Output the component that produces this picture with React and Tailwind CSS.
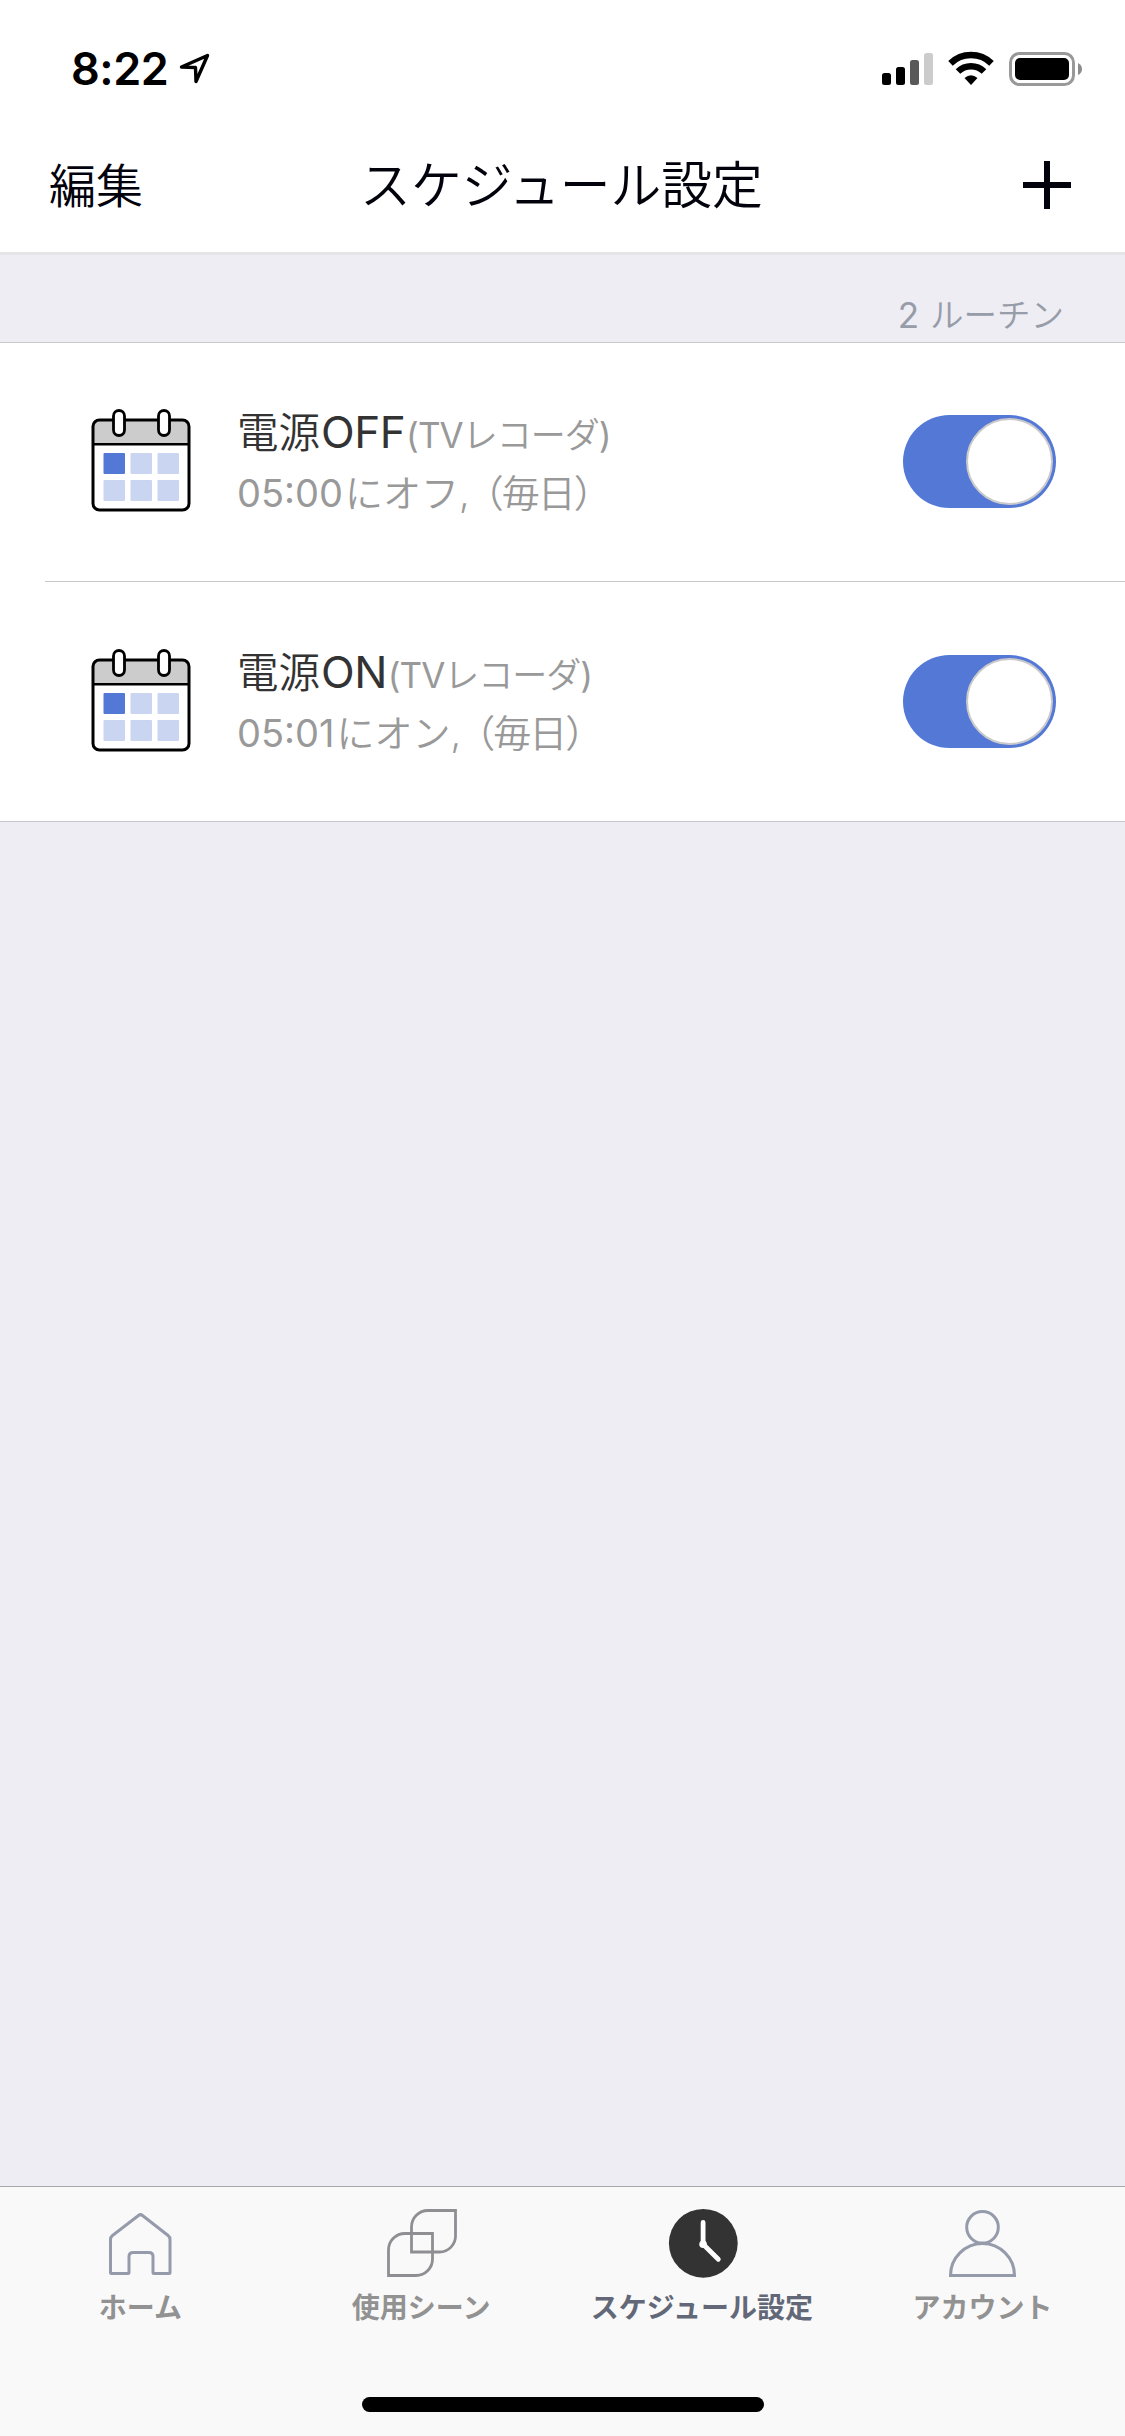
/**
 * App.jsx
 * Schedule settings screen: status bar, title bar, routine list and bottom tabs.
 */

import React, { useState } from 'react'

const initialRoutines = [
  { id: 1, kanji: '電源', mode: 'OFF', device: 'レコーダ', time: '05:00', action: 'にオフ', days: '（毎日）', on: true },
  { id: 2, kanji: '電源', mode: 'ON', device: 'レコーダ', time: '05:01', action: 'にオン', days: '（毎日）', on: true },
]

const tabs = [
  { id: 'home', label: 'ホーム', Icon: HomeIcon },
  { id: 'scene', label: '使用シーン', Icon: SceneIcon },
  { id: 'schedule', label: 'スケジュール設定', Icon: ClockIcon },
  { id: 'account', label: 'アカウント', Icon: AccountIcon },
]

function HomeIcon() {
  return (
    <svg width="72" height="72" viewBox="-0.5 -1 72 72" fill="none" stroke="#959bab" strokeWidth="3" strokeLinejoin="round">
      <path d="M6 64.5V31.5Q6 29 8 27.5L34 7.5Q36 5.8 38 7.5L63.6 27.5Q65.5 29 65.5 31.5V64.5Q65.5 65.5 64.5 65.5H49.5Q48.5 65.5 48.5 64.5V48.5Q48.5 44.5 44.5 44.5H28.5Q24.5 44.5 24.5 48.5V64.5Q24.5 65.5 23.5 65.5H7Q6 65.5 6 64.5Z" />
    </svg>
  )
}

function SceneIcon() {
  return (
    <svg width="72" height="72" viewBox="-1 0 72 72" fill="none" stroke="#8e8e93" strokeWidth="2.8">
      <path d="M25.5 44V20A16.5 16.5 0 0 1 42 3.5H69.5V28.5A16 16 0 0 1 53.5 45H25.5Z" />
      <path d="M2.5 68V43A16.5 16.5 0 0 1 19 26.5H46.5V51.5A16.5 16.5 0 0 1 30 68.5H2.5Z" />
    </svg>
  )
}

function ClockIcon() {
  return (
    <svg width="72" height="72" viewBox="-0.8 0 72 72" fill="none">
      <circle cx="36.5" cy="36.3" r="34.4" fill="#333" />
      <path d="M36.3 15.5V37.3L51.5 52.3" stroke="#fff" strokeWidth="4.8" strokeLinecap="round" />
      <circle cx="36.3" cy="37.3" r="3.8" fill="#fff" />
    </svg>
  )
}

function AccountIcon() {
  return (
    <svg width="72" height="72" viewBox="0 0 72 72" fill="none" stroke="#959bab" strokeWidth="3">
      <circle cx="35.5" cy="20.3" r="15.8" />
      <path d="M3.5 68.5A32 32 0 0 1 67.5 68.5Z" />
    </svg>
  )
}

function CalendarIcon() {
  return (
    <svg width="100" height="104" viewBox="0 0 100 104" fill="none">
      <path d="M2.5 35V17Q2.5 11 8.5 11H91.5Q97.5 11 97.5 17V35Z" fill="#ccc" />
      <rect x="2" y="11" width="96" height="90" rx="6.5" stroke="#000" strokeWidth="3" />
      <path d="M2 35.3H98" stroke="#000" strokeWidth="2.4" />
      <rect x="22.5" y="1.5" width="11" height="25" rx="5.5" fill="#fff" stroke="#000" strokeWidth="2.8" />
      <rect x="67.5" y="1.5" width="11" height="25" rx="5.5" fill="#fff" stroke="#000" strokeWidth="2.8" />
      <rect x="12.5" y="44" width="21.5" height="21" rx="1" fill="#5478d6" />
      <rect x="39.5" y="44" width="21.5" height="21" rx="1" fill="#cad5f1" />
      <rect x="66.5" y="44" width="21.5" height="21" rx="1" fill="#cad5f1" />
      <rect x="12.5" y="71" width="21.5" height="21" rx="1" fill="#cad5f1" />
      <rect x="39.5" y="71" width="21.5" height="21" rx="1" fill="#cad5f1" />
      <rect x="66.5" y="71" width="21.5" height="21" rx="1" fill="#cad5f1" />
    </svg>
  )
}

function StatusBar() {
  return (
    <div className="flex h-[132px] items-start justify-between pt-[49px] pr-[43px] pl-[71px]">
      <div className="flex items-start">
        <span className="w-[108px] text-[45px] leading-10 font-semibold tracking-[-0.5px] text-black">8:22</span>
        <svg width="32" height="36" viewBox="0 0 32 36" fill="none" className="mt-[2px]">
          <path d="M2.5 16L28.5 4.5L17 30.5L16.5 16.5Z" stroke="#000" strokeWidth="3.4" strokeLinejoin="round" />
        </svg>
      </div>
      <div className="flex items-start pt-[2px]">
        <svg width="51" height="36" viewBox="0 0 51 36">
          <rect x="0" y="22" width="9" height="12" rx="2.5" fill="#000" />
          <rect x="14" y="16" width="9" height="18" rx="2.5" fill="#000" />
          <rect x="28" y="9" width="9" height="25" rx="2.5" fill="#595959" />
          <rect x="42" y="2" width="9" height="32" rx="2.5" fill="#ccc" />
        </svg>
        <svg width="46" height="36" viewBox="0 0 46 36" fill="none" className="ml-[15px]">
          <path d="M2.5 12.3A29.5 29.5 0 0 1 43.5 12.3" stroke="#000" strokeWidth="6.5" />
          <path d="M10 20.5A18.5 18.5 0 0 1 36 20.5" stroke="#000" strokeWidth="6.5" />
          <path d="M16.5 27Q23 21.5 29.5 27L23 34Z" fill="#000" />
        </svg>
        <svg width="73" height="36" viewBox="0 0 73 36" fill="none" className="ml-[15px]">
          <rect x="1.5" y="2.5" width="63" height="31" rx="9" stroke="#999" strokeWidth="3" />
          <rect x="6" y="7" width="54" height="22" rx="5" fill="#000" />
          <path d="M69 12Q73 14 73 18T69 24Z" fill="#8c8c8c" />
        </svg>
      </div>
    </div>
  )
}

function TitleBar() {
  return (
    <div className="grid h-[120px] grid-cols-[1fr_auto_1fr] items-start pr-[51px] pl-[49px] text-[#02020c]">
      <button className="mt-[30px] text-left text-[47px] leading-[48px] font-[350]">編集</button>
      <h1 className="mt-[29px] text-[50.8px] leading-[50px] font-[350]">スケジュール設定</h1>
      <button className="mt-[29px] mr-[3px] justify-self-end">
        <svg width="48" height="48" viewBox="0 0 48 48" stroke="#02020c" strokeWidth="6">
          <path d="M24 0V48M0 24H48" />
        </svg>
      </button>
    </div>
  )
}

function Toggle({ on, onChange }) {
  return (
    <button
      onClick={onChange}
      className={`flex h-[93px] w-[153px] items-center rounded-full p-[3px] ${
        on ? 'justify-end bg-[#5478d6]' : 'justify-start bg-gray-300'
      }`}
    >
      <span className="size-[87px] rounded-full border-2 border-[#c9c9cb] bg-white" />
    </button>
  )
}

function RoutineRow({ routine, onToggle }) {
  return (
    <div className="flex h-[238px] items-start pr-[69px] pl-[91px]">
      <div className="mt-[66px]">
        <CalendarIcon />
      </div>
      <div className="mt-[59px] ml-[46px] flex-1 whitespace-nowrap">
        <div className="flex h-[61px] items-baseline leading-[60px] text-[#333]">
          <span className="text-[41.5px] font-[350]">{routine.kanji}</span>
          <span className="ml-px text-[44px] tracking-[-0.5px]">{routine.mode}</span>
          <span className="ml-px flex items-baseline text-[35px] tracking-[-1px] text-[#999]">
            <span>(TV</span>
            <span className="font-[350]">{routine.device}</span>
            <span>)</span>
          </span>
        </div>
        <div className="flex h-[60px] items-baseline text-[38px] leading-[60px] font-[350] text-[#999]">
          <span className="font-normal">{routine.time}</span>
          <span className="ml-[2px]">{routine.action},</span>
          <span className="-ml-[4px] tracking-[-2px]">{routine.days}</span>
        </div>
      </div>
      <div className="mt-[72px]">
        <Toggle on={routine.on} onChange={onToggle} />
      </div>
    </div>
  )
}

function TabBar({ active, onSelect }) {
  return (
    <nav className="flex h-[250px] flex-col items-center border-t border-[#a7a7aa] bg-[#f9f9f9]">
      <div className="grid w-full flex-1 grid-cols-4 pt-[20px] pr-[2px]">
        {tabs.map(({ id, label, Icon }) => (
          <button
            key={id}
            onClick={() => onSelect(id)}
            className={`flex flex-col items-center whitespace-nowrap ${
              active === id ? 'text-[#636878]' : 'text-[#929292]'
            }`}
          >
            <Icon />
            <span className="mt-[9px] text-[28px] leading-10 font-bold">{label}</span>
          </button>
        ))}
      </div>
      <div className="mb-[24px] h-[15px] w-[402px] rounded-full bg-black" />
    </nav>
  )
}

export default function App() {
  const [routines, setRoutines] = useState(initialRoutines)
  const [activeTab, setActiveTab] = useState('schedule')

  const toggleRoutine = id =>
    setRoutines(list => list.map(r => (r.id === id ? { ...r, on: !r.on } : r)))

  return (
    <div
      lang="ja"
      className="flex h-[2436px] w-[1125px] flex-col overflow-hidden bg-[#eeedf3] font-['Inter','Noto_Sans_CJK_JP',sans-serif]"
    >
      <header className="border-b-[3px] border-[#e5e5e5] bg-white">
        <StatusBar />
        <TitleBar />
      </header>

      {/* Routine list */}
      <main className="flex-1">
        <div className="flex h-[87px] items-end justify-end pr-[61px] pb-[6px] text-[33.5px] leading-[42px] font-[350] text-[#979ca9]">
          <span className="text-[35px] font-normal">{routines.length}</span>
          <span className="ml-[11px]">ルーチン</span>
        </div>
        <div className="border-y border-[#c8c7cc] bg-white">
          {routines.map((routine, i) => (
            <React.Fragment key={routine.id}>
              {i > 0 && <div className="mb-px ml-[45px] h-px bg-[#c8c7cc]" />}
              <RoutineRow routine={routine} onToggle={() => toggleRoutine(routine.id)} />
            </React.Fragment>
          ))}
        </div>
      </main>

      <TabBar active={activeTab} onSelect={setActiveTab} />
    </div>
  )
}
